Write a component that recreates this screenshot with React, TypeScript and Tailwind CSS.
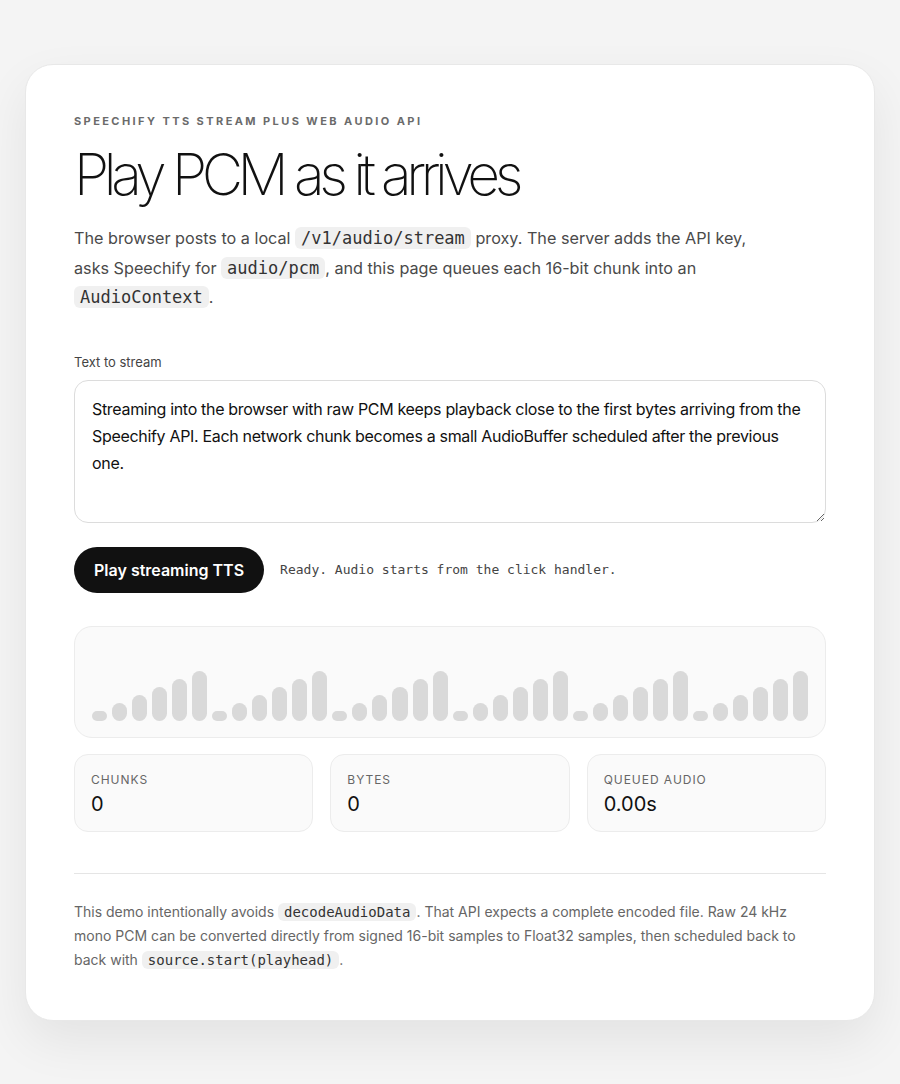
import React from "react";

const heights = [10, 18, 26, 34, 42, 50];
const bars = Array.from({ length: 36 }, (_, i) => heights[i % 6]);

function Code({ children, className = "" }: { children: React.ReactNode; className?: string }) {
  return (
    <code
      className={`rounded-[6px] bg-[#f0f0f0] px-[6px] py-[1px] text-[#333] ${className}`}
      style={{ fontFamily: '"DejaVu Sans Mono", monospace' }}
    >
      {children}
    </code>
  );
}

export default function App() {
  return (
    <div
      className="min-h-[1084px] bg-[#f4f4f4] px-[25px] pt-[64px] pb-[65px]"
      style={{ fontFamily: 'Inter, "Noto Sans", sans-serif' }}
    >
      <div className="rounded-[28px] border border-[#e8e8e8] bg-white px-[48px] pt-[48px] pb-[48px] shadow-[0_20px_50px_rgba(0,0,0,0.07)]">
        <div className="text-[11px] font-bold uppercase tracking-[0.22em] text-[#6b6b6b]">
          Speechify TTS stream plus Web Audio API
        </div>
        <h1 className="mt-[14px] text-[57px] font-extralight leading-[1.1] tracking-[-0.095em] text-[#111]">
          Play PCM as it arrives
        </h1>
        <p className="mt-[18px] text-[16.2px] leading-[29.5px] text-[#4a4a4a]">
          The browser posts to a local <Code className="text-[17px]">/v1/audio/stream</Code> proxy. The server adds the API key,
          <br />
          asks Speechify for <Code className="text-[17px]">audio/pcm</Code>, and this page queues each 16-bit chunk into an{" "}
          <Code className="text-[17px]">AudioContext</Code>.
        </p>

        <label className="mt-[40px] block text-[13px] text-[#444]">Text to stream</label>
        <textarea
          className="mt-[8px] block h-[143px] w-full resize-y rounded-[14px] border border-[#dcdcdc] px-[17px] py-[15px] text-[16px] leading-[27px] tracking-[-0.02em] text-[#111] outline-none"
          style={{ fontFamily: 'Inter, "Noto Sans", sans-serif' }}
          defaultValue="Streaming into the browser with raw PCM keeps playback close to the first bytes arriving from the Speechify API. Each network chunk becomes a small AudioBuffer scheduled after the previous one."
        />

        <div className="mt-[24px] flex items-center gap-[16px]">
          <button className="h-[46px] rounded-full bg-[#111] px-[20px] text-[16px] font-semibold text-white">
            Play streaming TTS
          </button>
          <span
            className="text-[13px] text-[#444]"
            style={{ fontFamily: '"DejaVu Sans Mono", monospace' }}
          >
            Ready. Audio starts from the click handler.
          </span>
        </div>

        <div className="mt-[33px] flex h-[112px] items-end gap-[5px] rounded-[18px] border border-[#ececec] bg-[#fafafa] px-[17px] pb-[16px]">
          {bars.map((h, i) => (
            <div key={i} className="flex-1 rounded-full bg-[#d9d9d9]" style={{ height: h }} />
          ))}
        </div>

        <div className="mt-[16px] grid grid-cols-3 gap-[17px]">
          {[
            ["Chunks", "0"],
            ["Bytes", "0"],
            ["Queued audio", "0.00s"],
          ].map(([l, v]) => (
            <div key={l} className="h-[78px] rounded-[14px] border border-[#ececec] bg-[#fafafa] px-[16px] pt-[17px]">
              <div className="text-[12px] uppercase leading-[16px] tracking-[0.08em] text-[#666]">{l}</div>
              <div className="mt-[3px] text-[20px] leading-[26px] text-[#111]">{v}</div>
            </div>
          ))}
        </div>

        <div className="mt-[41px] h-px bg-[#e5e5e5]" />

        <p className="mt-[26px] text-[14px] leading-[24px] text-[#666]">
          This demo intentionally avoids <Code className="text-[14px] py-0">decodeAudioData</Code>. That API expects a complete encoded file. Raw 24 kHz
          mono PCM can be converted directly from signed 16-bit samples to Float32 samples, then scheduled back to back with{" "}
          <Code className="text-[14px] py-0">source.start(playhead)</Code>.
        </p>
      </div>
    </div>
  );
}
